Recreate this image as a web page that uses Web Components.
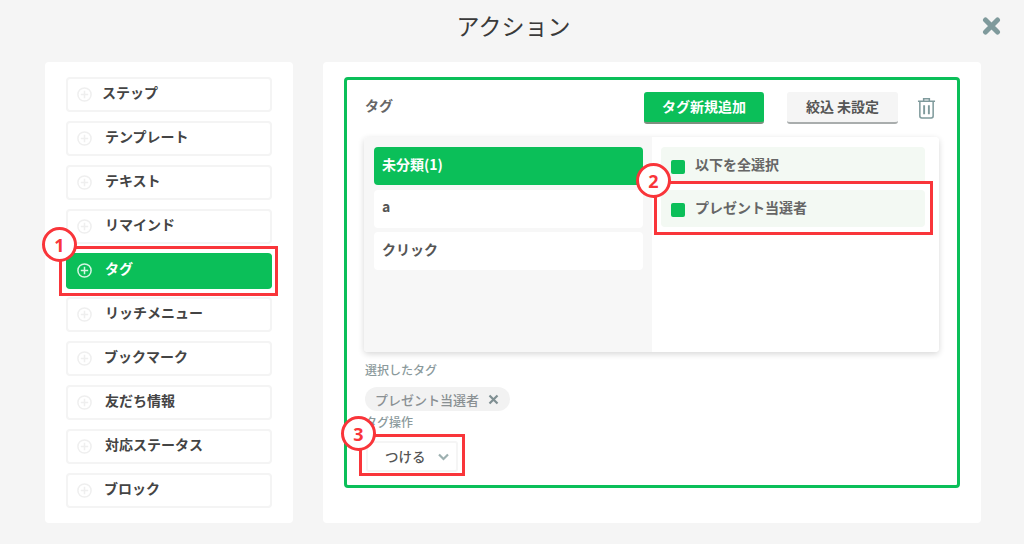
<!DOCTYPE html>
<html lang="ja">
<head>
<meta charset="utf-8">
<title>アクション</title>
<style>
    html, body { margin: 0; padding: 0; background: #f5f5f5; }
    body { font-family: "Noto Sans CJK JP", "Noto Sans", sans-serif; color: #444; }
</style>
</head>
<body>
<action-dialog>
    <action-list slot="list">
        <action-item style="--shift:-3px">ステップ</action-item>
        <action-item>テンプレート</action-item>
        <action-item>テキスト</action-item>
        <action-item>リマインド</action-item>
        <action-item active>タグ</action-item>
        <action-item>リッチメニュー</action-item>
        <action-item style="--shift:-1px">ブックマーク</action-item>
        <action-item>友だち情報</action-item>
        <action-item>対応ステータス</action-item>
        <action-item style="--shift:-1px">ブロック</action-item>
    </action-list>
    <tag-editor slot="detail"></tag-editor>
    <red-marker num="1" style="left:59px;top:246px;width:213px;height:44px;--cx:-20px;--cy:-22px"></red-marker>
    <red-marker num="2" style="left:654px;top:181px;width:273px;height:48px"></red-marker>
    <red-marker num="3" style="left:359px;top:434px;width:100px;height:36px"></red-marker>
</action-dialog>

<script>
    class ActionDialog extends HTMLElement {
        constructor() {
            super();
            this.attachShadow({ mode: "open" });
            this.shadowRoot.innerHTML = `
            <style>
                :host {
                    display: block;
                    position: relative;
                    width: 1024px;
                    height: 544px;
                    overflow: hidden;
                    background: #f5f5f5;
                }
                header {
                    height: 62px;
                    box-sizing: border-box;
                    padding: 7px 0 0 3px;
                    text-align: center;
                    font-size: 23px;
                    line-height: 36px;
                    color: #3a3a3a;
                }
                .close {
                    position: absolute;
                    left: 982px;
                    top: 17px;
                    width: 19px;
                    height: 18px;
                }
                main {
                    display: flex;
                    gap: 30px;
                    padding-left: 45px;
                }
                .panel {
                    background: #fff;
                    border-radius: 4px;
                    height: 461px;
                    box-sizing: border-box;
                }
                .left { width: 248px; padding: 15px 21px; }
                .right { width: 658px; padding: 15px 21px; }
            </style>
            <header>アクション</header>
            <svg class="close" viewBox="0 0 19 18">
                <path d="M3.5 3 L15.5 15 M15.5 3 L3.5 15" stroke="#7f9a9c" stroke-width="5" stroke-linecap="round"/>
            </svg>
            <main>
                <div class="panel left"><slot name="list"></slot></div>
                <div class="panel right"><slot name="detail"></slot></div>
            </main>
            <slot></slot>
            `;
        }
    }

    class ActionList extends HTMLElement {
        constructor() {
            super();
            this.attachShadow({ mode: "open" });
            this.shadowRoot.innerHTML = `
            <style>
                :host { display: flex; flex-direction: column; gap: 9px; }
            </style>
            <slot></slot>
            `;
        }
    }

    class ActionItem extends HTMLElement {
        constructor() {
            super();
            this.attachShadow({ mode: "open" });
            this.shadowRoot.innerHTML = `
            <style>
                :host {
                    display: flex;
                    align-items: center;
                    height: 35px;
                    box-sizing: border-box;
                    border: 2px solid #f4f4f4;
                    border-radius: 4px;
                    padding-left: 9px;
                    font-size: 14px;
                    font-weight: 700;
                    color: #444;
                    background: #fff;
                }
                :host([active]) {
                    background: #0bbf59;
                    border-color: #0bbf59;
                    box-shadow: 0 1px 0 #0bbf59;
                    color: #fff;
                }
                svg { width: 15px; height: 15px; flex: none; }
                circle, path { fill: none; stroke: #efefef; stroke-width: 1.5; }
                :host([active]) circle, :host([active]) path { stroke: #d4f5e2; }
                span { margin-left: calc(13px + var(--shift, 0px)); margin-bottom: 6px; }
            </style>
            <svg viewBox="0 0 15 15">
                <circle cx="7.5" cy="7.5" r="6.6"/>
                <path d="M7.5 3.8 V11.2 M3.8 7.5 H11.2"/>
            </svg>
            <span><slot></slot></span>
            `;
        }
    }

    class TagEditor extends HTMLElement {
        constructor() {
            super();
            this.attachShadow({ mode: "open" });
            this.shadowRoot.innerHTML = `
            <style>
                :host {
                    display: block;
                    height: 411px;
                    box-sizing: border-box;
                    border: 3px solid #0bbf59;
                    border-radius: 4px;
                    padding: 12px 18px 0 17px;
                    font-size: 12px;
                }
                .top {
                    display: flex;
                    align-items: center;
                    height: 32px;
                }
                .title { flex: 1; font-size: 14px; font-weight: 700; color: #666; margin-top: -6px; margin-left: 1px; }
                .btn {
                    height: 32px;
                    box-sizing: border-box;
                    border-radius: 3px;
                    display: flex;
                    align-items: center;
                    justify-content: center;
                    padding-bottom: 2px;
                    font-size: 14px;
                    font-weight: 700;
                }
                .add {
                    width: 120px;
                    background: #0bbf59;
                    color: #fff;
                    border-bottom: 2px solid #7f8f7f;
                }
                .filter {
                    width: 111px;
                    margin-left: 23px;
                    background: #f5f5f5;
                    color: #555;
                    border-bottom: 2px solid #a9adad;
                }
                .trash { width: 19px; height: 22px; margin-left: 19px; margin-right: 3px; flex: none; }
                .box {
                    display: grid;
                    grid-template-columns: 288px 1fr;
                    height: 215px;
                    margin-top: 13px;
                    border-radius: 4px;
                    box-shadow: 0 2px 6px rgba(0,0,0,0.16);
                    overflow: hidden;
                }
                .cats {
                    background: #f7f7f7;
                    padding: 10px 9px 0 10px;
                    display: flex;
                    flex-direction: column;
                    gap: 4.5px;
                }
                .cat {
                    height: 38px;
                    box-sizing: border-box;
                    background: #fff;
                    border-radius: 4px;
                    display: flex;
                    align-items: center;
                    padding: 0 0 5px 8px;
                    font-size: 14px;
                    font-weight: 700;
                    color: #555;
                }
                .cat.on { background: #0bbf59; color: #fff; }
                .tags {
                    background: #fff;
                    padding: 10px 14px 0 9px;
                    display: flex;
                    flex-direction: column;
                    gap: 6px;
                }
                .tag {
                    height: 37px;
                    background: #f3f9f3;
                    border-radius: 4px;
                    display: flex;
                    align-items: center;
                    padding-left: 10px;
                    font-size: 14px;
                    font-weight: 700;
                    color: #666;
                }
                .tag i {
                    width: 14px;
                    height: 14px;
                    border-radius: 2px;
                    background: #0bbf59;
                    margin-right: 10px;
                    margin-top: 2px;
                }
                .tag span { margin-bottom: 4px; }
                .label { color: #8b9a9c; font-weight: 500; line-height: 16px; margin-left: 1px; }
                .chip {
                    display: flex;
                    width: fit-content;
                    align-items: center;
                    height: 24px;
                    padding: 0 11px 0 10px;
                    margin: 9px 0 0 1px;
                    border-radius: 12px;
                    background: #f2f2f2;
                    color: #8a9093;
                    font-size: 13px;
                    font-weight: 500;
                }
                .chip svg { width: 11px; height: 11px; margin-left: 9px; }
                .select {
                    display: flex;
                    align-items: center;
                    width: 92px;
                    height: 31px;
                    box-sizing: border-box;
                    margin-top: 11px;
                    margin-left: 2px;
                    border: 2px solid #f5f5f5;
                    border-radius: 3px;
                    padding: 0 0 2px 17px;
                    font-size: 13.5px;
                    font-weight: 500;
                    color: #555;
                }
                .select svg { width: 11px; height: 8px; margin: 2px 0 0 12px; }
            </style>
            <div class="top">
                <div class="title">タグ</div>
                <div class="btn add">タグ新規追加</div>
                <div class="btn filter">絞込 未設定</div>
                <svg class="trash" viewBox="0 0 20 23">
                    <g fill="none" stroke="#7f9a9c" stroke-width="1.6">
                        <path d="M1 4.5 H19 M7 4.5 V1.8 H13 V4.5"/>
                        <path d="M3 4.5 V20 Q3 22 5 22 H15 Q17 22 17 20 V4.5"/>
                        <path d="M7.5 8.5 V18 M12.5 8.5 V18" stroke-width="2"/>
                    </g>
                </svg>
            </div>
            <div class="box">
                <div class="cats">
                    <div class="cat on">未分類(1)</div>
                    <div class="cat">a</div>
                    <div class="cat">クリック</div>
                </div>
                <div class="tags">
                    <div class="tag"><i></i><span>以下を全選択</span></div>
                    <div class="tag"><i></i><span>プレゼント当選者</span></div>
                </div>
            </div>
            <div class="label" style="margin-top:10px">選択したタグ</div>
            <div class="chip">プレゼント当選者
                <svg viewBox="0 0 11 11"><path d="M1.5 1.5 L9.5 9.5 M9.5 1.5 L1.5 9.5" stroke="#7f8f92" stroke-width="2.2"/></svg>
            </div>
            <div class="label" style="margin-top:3px">タグ操作</div>
            <div class="select">つける
                <svg viewBox="0 0 11 8"><path d="M1 1.5 L5.5 6 L10 1.5" fill="none" stroke="#9db0b0" stroke-width="2.2"/></svg>
            </div>
            `;
        }
    }

    // red box + numbered circle drawn over the screenshot
    class RedMarker extends HTMLElement {
        constructor() {
            super();
            this.attachShadow({ mode: "open" });
            this.shadowRoot.innerHTML = `
            <style>
                :host {
                    display: block;
                    position: absolute;
                    border: 3px solid #f9353a;
                }
                .num {
                    position: absolute;
                    left: var(--cx, -21px);
                    top: var(--cy, -21px);
                    width: 35px;
                    height: 35px;
                    box-sizing: border-box;
                    border: 3px solid #f9353a;
                    border-radius: 50%;
                    background: #fff;
                    color: #f9353a;
                    display: flex;
                    align-items: center;
                    justify-content: center;
                    font-size: 18px;
                    font-weight: 700;
                    font-family: "Noto Sans", sans-serif;
                }
            </style>
            <div class="num">${this.getAttribute("num") || ""}</div>
            `;
        }
    }

    customElements.define("action-dialog", ActionDialog);
    customElements.define("action-list", ActionList);
    customElements.define("action-item", ActionItem);
    customElements.define("tag-editor", TagEditor);
    customElements.define("red-marker", RedMarker);
</script>
</body>
</html>
